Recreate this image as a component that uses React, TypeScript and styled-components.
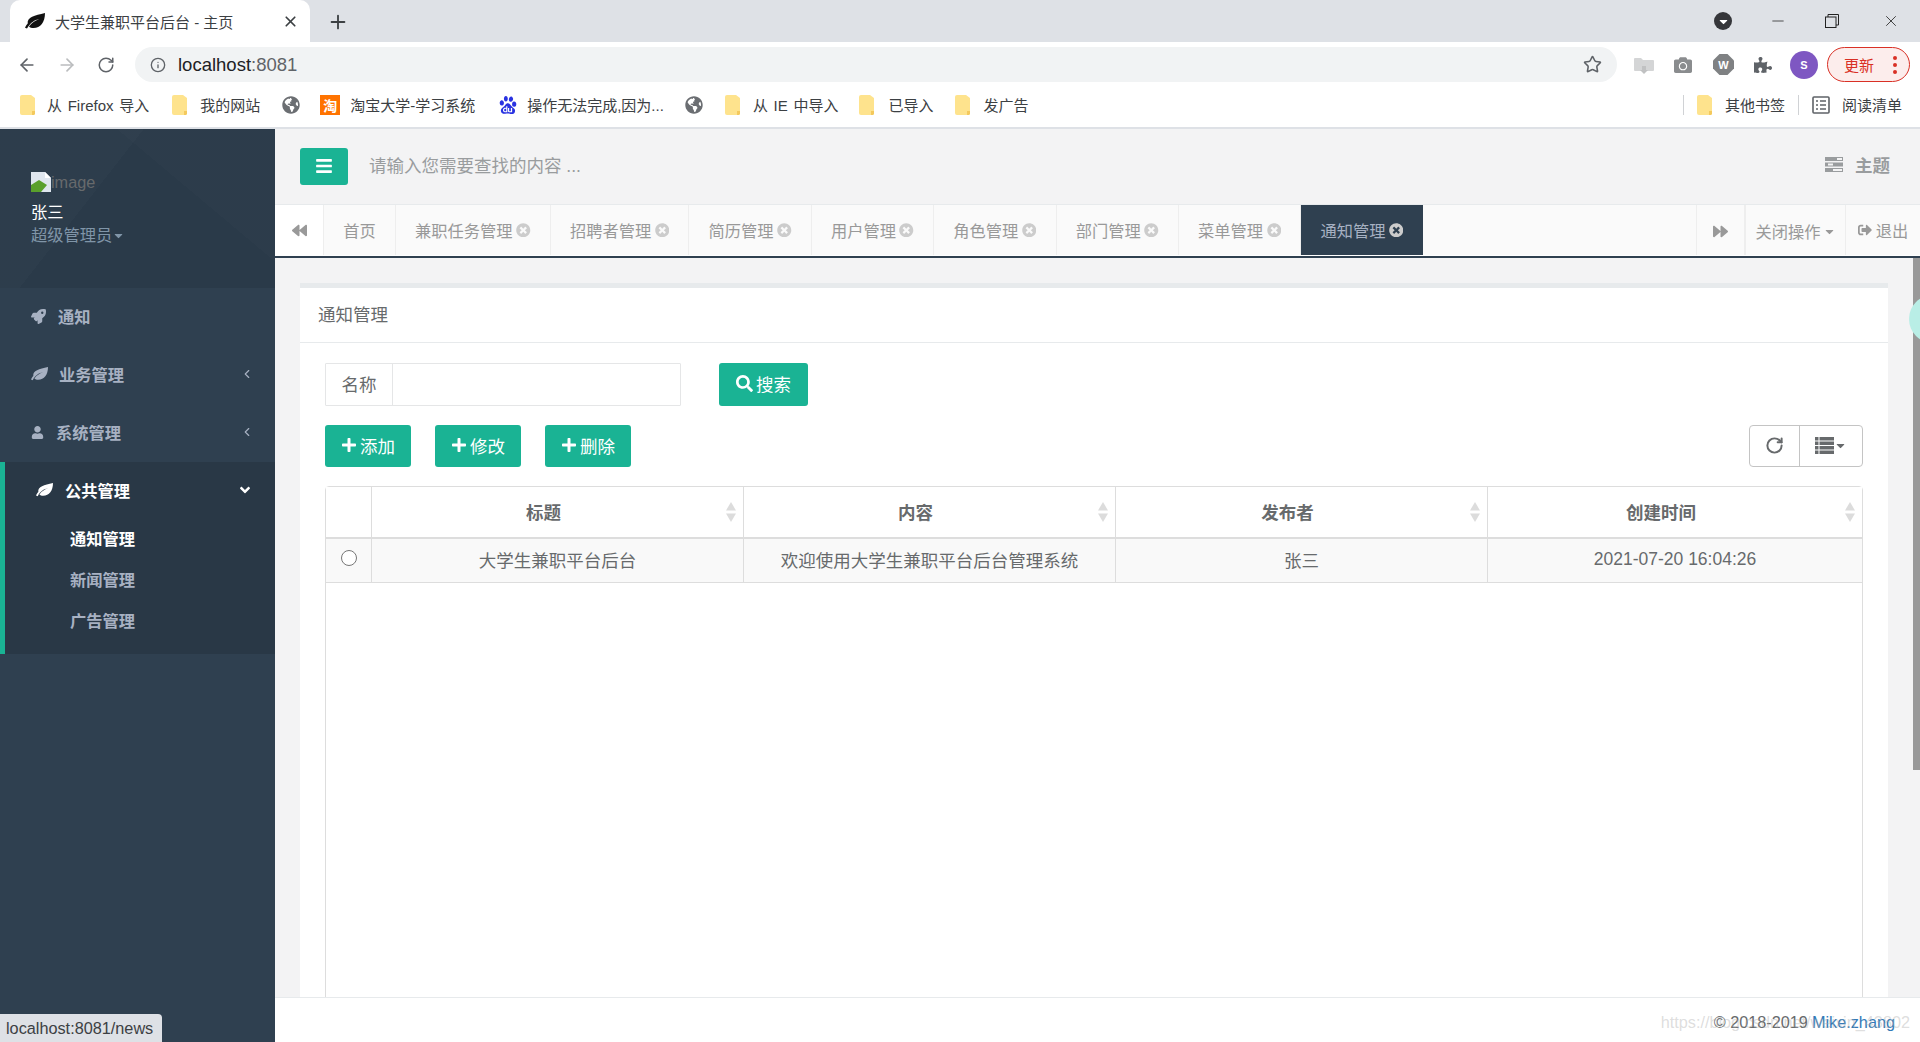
import { ReactNode } from 'react';
import styled, { createGlobalStyle } from 'styled-components';
import {
  FaAngleDown,
  FaBackward,
  FaBars,
  FaCamera,
  FaCaretDown,
  FaForward,
  FaGlobeAmericas,
  FaPlus,
  FaPuzzlePiece,
  FaRocket,
  FaSearch,
  FaSignOutAlt,
  FaTimesCircle,
  FaUser,
} from 'react-icons/fa';
import { SiBaidu } from 'react-icons/si';
import { ArrowLeft, ArrowRight, ChevronLeft, Info, Minus, Plus, RotateCw, Star, X } from 'lucide-react';

const GlobalStyle = createGlobalStyle`
  html, body { margin: 0; padding: 0; height: 100%; }
  body {
    font-family: "Liberation Sans", "Noto Sans CJK SC", sans-serif;
    color: #676a6c;
    overflow: hidden;
  }
  * { box-sizing: border-box; }
`;

const Root = styled.div`
  position: relative;
  width: 1920px;
  height: 1042px;
  overflow: hidden;
  display: flex;
  flex-direction: column;
`;

/* browser chrome */
const TabStrip = styled.div`
  height: 42px;
  background: #dee1e6;
  display: flex;
  align-items: flex-end;
  padding-left: 10px;
  color: #3c4043;
`;
const BrowserTab = styled.div`
  width: 300px;
  height: 42px;
  background: #fff;
  border-radius: 10px 10px 0 0;
  display: flex;
  align-items: center;
  padding-left: 15px;
  font-size: 15px;
  color: #3c4043;
`;
const TabTitle = styled.span`
  margin-left: 10px;
  flex: 1;
  white-space: nowrap;
`;
const TabClose = styled.span`
  display: flex;
  margin-right: 11px;
`;
const NewTab = styled.span`
  display: flex;
  margin: 0 0 9px 17px;
  color: #3c4043;
`;
const WindowControls = styled.div`
  margin-left: auto;
  height: 42px;
  display: flex;
  align-items: center;
  color: #222;
`;
const DropCircle = styled.span`
  width: 18px;
  height: 18px;
  border-radius: 50%;
  background: #35363a;
  display: flex;
  align-items: center;
  justify-content: center;
  color: #fff;
  margin-right: 37px;
`;
const WinButton = styled.span<{ $gap: number }>`
  display: flex;
  margin-right: ${(p) => p.$gap}px;
`;

const Toolbar = styled.div`
  height: 42px;
  background: #fff;
  display: flex;
  align-items: center;
  padding: 3px 0 0 17px;
`;
const NavIcon = styled.span<{ $off?: boolean }>`
  display: flex;
  width: 20px;
  margin-right: 20px;
  color: ${(p) => (p.$off ? '#babcbe' : '#5f6368')};
`;
const AddressBar = styled.div`
  width: 1482px;
  height: 35px;
  margin-left: -2px;
  background: #f1f3f4;
  border-radius: 18px;
  display: flex;
  align-items: center;
  padding: 0 15px;
  font-size: 18.5px;
  color: #202124;
`;
const Host = styled.span`
  margin-left: 12px;
`;
const Port = styled.span`
  color: #5f6368;
`;
const StarWrap = styled.span`
  display: flex;
  margin-left: auto;
  color: #5f6368;
`;
const ExtGroup = styled.div`
  display: flex;
  align-items: center;
  margin-left: 17px;
`;
const Ext = styled.span<{ $w: number }>`
  width: ${(p) => p.$w}px;
  display: flex;
  justify-content: center;
  align-items: center;
`;
const OctaText = styled.text`
  font-family: "Liberation Sans", sans-serif;
  font-weight: 700;
  font-size: 11px;
  fill: #fff;
`;
const Avatar = styled.span`
  width: 28px;
  height: 28px;
  flex: none;
  border-radius: 50%;
  background: #7e57c2;
  color: #fff;
  font-size: 11px;
  font-weight: 700;
  display: flex;
  align-items: center;
  justify-content: center;
`;
const UpdatePill = styled.div`
  width: 83px;
  height: 35px;
  margin-left: 11px;
  border: 1.5px solid #d93025;
  border-radius: 18px;
  background: #fcedec;
  color: #d93025;
  font-size: 15px;
  display: flex;
  align-items: center;
  padding-left: 16px;
`;
const Dots = styled.span`
  margin-left: 19px;
  display: flex;
  flex-direction: column;
  gap: 3px;
`;
const Dot = styled.i`
  width: 4px;
  height: 4px;
  border-radius: 50%;
  background: #d93025;
`;

const BookmarkBar = styled.div`
  height: 45px;
  background: #fff;
  border-bottom: 2px solid #dee1e6;
  display: flex;
  align-items: center;
  padding: 0 18px 2px 20px;
  font-size: 15px;
  word-spacing: 1.500px;
  color: #3c4043;
`;
const Bookmark = styled.span<{ $gap: number; $next: number }>`
  display: flex;
  align-items: center;
  gap: ${(p) => p.$gap}px;
  margin-right: ${(p) => p.$next}px;
  white-space: nowrap;
`;
const GlobeIcon = styled(FaGlobeAmericas)`
  color: #6b6e72;
  font-size: 18px;
`;
const TaobaoIcon = styled.span`
  width: 20px;
  height: 20px;
  background: #ff7300;
  color: #fff;
  font-size: 14px;
  font-weight: 700;
  display: flex;
  align-items: center;
  justify-content: center;
`;
const BaiduIcon = styled(SiBaidu)`
  color: #2932e1;
  font-size: 18px;
`;
const BarDivider = styled.span`
  width: 1px;
  height: 20px;
  background: #d0d2d5;
`;
const BookmarkRight = styled.div`
  margin-left: auto;
  display: flex;
  align-items: center;
  gap: 13px;
`;
const ReaderLabel = styled.span`
  margin-left: -1px;
`;

function Folder() {
  return (
    <svg width="16" height="20" viewBox="0 0 16 20">
      <path d="M2 0h9l4 3v15a2 2 0 0 1-2 2H2a2 2 0 0 1-2-2V2a2 2 0 0 1 2-2z" fill="#fee38d" />
      <path d="M12 20v-4h3v3l-1 1z" fill="#f4c95d" />
    </svg>
  );
}

function ReaderIcon() {
  return (
    <svg width="18" height="18" viewBox="0 0 18 18" fill="none" stroke="#5f6368" strokeWidth="1.6">
      <rect x="1" y="1" width="16" height="16" rx="1" />
      <path d="M4 5h2M8 5h6M4 9h2M8 9h6M4 13h2M8 13h6" />
    </svg>
  );
}

function Leaf({ size, color = 'currentColor' }: { size: number; color?: string }) {
  return (
    <svg width={size} height={size * 0.8} viewBox="0 0 20 16" fill={color}>
      <path d="M20 0C20 9 15.500 15 8.500 15C6.500 15 5 14.500 4 13.500C7 9.500 10.500 7.500 14.500 6C9.500 7 5.500 9.500 2 15.500L0 14.800C1 12.500 2 11.200 2.700 10.500C2 4 9.500 2.500 20 0Z" />
    </svg>
  );
}

/* page */
const Body = styled.div`
  flex: 1;
  display: flex;
  min-height: 0;
`;
const Sidebar = styled.aside`
  width: 275px;
  flex: none;
  background: #2f4050;
`;
const Profile = styled.div`
  height: 159px;
  padding: 43px 0 0 31px;
  background:
    linear-gradient(128deg, rgba(255, 255, 255, 0.015) 36%, transparent 36%),
    linear-gradient(40deg, transparent 66%, rgba(255, 255, 255, 0.012) 66%),
    #2a3a49;
`;
const Avatarless = styled.div`
  display: flex;
  align-items: center;
  height: 20px;
  font-size: 16.25px;
  color: #676a6c;
`;
const ProfileName = styled.div`
  margin-top: 8px;
  height: 24px;
  line-height: 24px;
  font-size: 16.25px;
  color: #fff;
`;
const ProfileRole = styled.div`
  height: 22px;
  line-height: 22px;
  font-size: 16.25px;
  color: #8095a8;
  display: flex;
  align-items: center;
`;
const MenuItem = styled.div`
  height: 58px;
  display: flex;
  align-items: center;
  padding: 0 21px 2px 31px;
  font-size: 16.25px;
  font-weight: 700;
  color: #a7b1c2;
`;
const MenuLabel = styled.span<{ $gap: number }>`
  margin-left: ${(p) => p.$gap}px;
  flex: 1;
`;
const ActiveGroup = styled.div`
  height: 192px;
  background: #293846;
  border-left: 5px solid #1ab394;
`;
const ActiveHead = styled(MenuItem)`
  color: #fff;
  padding-right: 22px;
`;
const ActiveHeadIn = styled.div`
  display: flex;
  align-items: center;
  width: 100%;
`;
const SubList = styled.div`
  display: flex;
  flex-direction: column;
  margin-top: -3px;
`;
const SubItem = styled.div<{ $active?: boolean }>`
  height: 41px;
  padding-left: 65px;
  display: flex;
  align-items: center;
  font-size: 16.25px;
  font-weight: 700;
  color: ${(p) => (p.$active ? '#fff' : '#a7b1c2')};
`;

const Main = styled.main`
  flex: 1;
  min-width: 0;
  display: flex;
  flex-direction: column;
  background: #f3f3f4;
`;
const TopNav = styled.div`
  height: 76px;
  flex: none;
  border-bottom: 1px solid #e7eaec;
  display: flex;
  align-items: center;
  padding: 0 30px 1px 25px;
`;
const MenuButton = styled.span`
  width: 48px;
  height: 37px;
  border-radius: 3px;
  background: #1ab394;
  color: #fff;
  display: flex;
  align-items: center;
  justify-content: center;
  font-size: 18px;
`;
const SearchHint = styled.span`
  margin: 0 0 3px 21px;
  font-size: 17.5px;
  color: #999c9e;
`;
const ThemeLink = styled.span`
  margin: 0 0 3px auto;
  display: flex;
  align-items: center;
  gap: 12px;
  font-size: 17.5px;
  font-weight: 700;
  color: #999c9e;
`;
const TabRow = styled.div`
  height: 53px;
  flex: none;
  background: #fff;
  border-bottom: 2px solid #2f4050;
  display: flex;
  color: #999;
  font-size: 16.25px;
`;
const ArrowCell = styled.span<{ $w: number }>`
  width: ${(p) => p.$w}px;
  height: 50px;
  flex: none;
  display: flex;
  align-items: center;
  justify-content: center;
  background: #fff;
  border-right: 1px solid #eee;
  font-size: 15px;
  color: #999;
`;
const PageTab = styled.span<{ $active?: boolean }>`
  height: 50px;
  flex: none;
  padding: 0 19.200px;
  display: flex;
  align-items: center;
  gap: 3.500px;
  white-space: nowrap;
  background: ${(p) => (p.$active ? '#2f4050' : '#fafafa')};
  color: ${(p) => (p.$active ? '#a7b1c2' : '#999')};
  border-right: ${(p) => (p.$active ? '0' : '1px solid #eee')};
`;
const TabFill = styled.span`
  flex: 1;
  height: 50px;
  background: #fafafa;
`;
const RightCell = styled(ArrowCell)`
  border-right: 1px solid #eee;
  border-left: 1px solid #eee;
  background: #fafafa;
  font-size: 16.25px;
  gap: 2px;
  padding-top: 2px;
`;
const LogoutCell = styled.span`
  width: 74px;
  height: 50px;
  background: #fafafa;
  display: flex;
  align-items: center;
  justify-content: center;
  gap: 4px;
`;
const CloseIcon = styled(FaTimesCircle)`
  color: #ccc;
  font-size: 14.500px;
`;
const Content = styled.div`
  flex: 1;
  min-height: 0;
  overflow: hidden;
  padding: 25px 32px 0 25px;
`;
const Panel = styled.section`
  background: #fff;
  border-top: 5px solid #e7eaec;
`;
const PanelTitle = styled.h5`
  margin: 0;
  height: 55px;
  padding: 0 0 3px 18px;
  display: flex;
  align-items: center;
  font-size: 17.5px;
  font-weight: 400;
  border-bottom: 1px solid #e7eaec;
`;
const PanelBody = styled.div`
  padding: 20px 25px;
  display: flex;
  flex-direction: column;
  gap: 19px;
`;
const SearchRow = styled.div`
  display: flex;
  gap: 38px;
`;
const InputGroup = styled.div`
  width: 356px;
  height: 43px;
  border: 1px solid #e5e6e7;
  border-radius: 1px;
  display: flex;
`;
const Addon = styled.span`
  width: 67px;
  border-right: 1px solid #e5e6e7;
  display: flex;
  align-items: center;
  justify-content: center;
  padding-bottom: 2px;
  font-size: 17.5px;
`;
const PrimaryButton = styled.span<{ $h: number; $w: number }>`
  width: ${(p) => p.$w}px;
  height: ${(p) => p.$h}px;
  border-radius: 3px;
  background: #1ab394;
  color: #fff;
  display: flex;
  align-items: center;
  justify-content: center;
  gap: 3px;
  padding-bottom: 2px;
  font-size: 17.5px;
`;
const ToolRow = styled.div`
  display: flex;
  gap: 24px;
`;
const ToolGroup = styled.div`
  margin-left: auto;
  width: 114px;
  height: 42px;
  border: 1px solid #c4c4c4;
  border-radius: 4px;
  display: flex;
  color: #676a6c;
`;
const ToolCell = styled.span<{ $w?: number }>`
  width: ${(p) => p.$w ?? 49}px;
  display: flex;
  align-items: center;
  justify-content: center;
  flex: ${(p) => (p.$w ? 'none' : 1)};
  padding-bottom: 2px;
  & + & {
    border-left: 1px solid #c4c4c4;
  }
`;
const TableBox = styled.div`
  height: 640px;
  border: 1px solid #ddd;
  border-radius: 4px;
`;
const Row = styled.div<{ $head?: boolean }>`
  display: grid;
  grid-template-columns: 45px 372px 372px 372px 1fr;
  height: ${(p) => (p.$head ? 52 : 44)}px;
  background: ${(p) => (p.$head ? '#fff' : '#f9f9f9')};
  border-bottom: ${(p) => (p.$head ? '2px' : '1px')} solid #ddd;
`;
const Cell = styled.div<{ $head?: boolean }>`
  position: relative;
  display: flex;
  align-items: center;
  justify-content: center;
  font-size: 17.5px;
  font-weight: ${(p) => (p.$head ? 700 : 400)};
  padding: 0 ${(p) => (p.$head ? 28 : 0)}px 2px 0;
  & + & {
    border-left: 1px solid #ddd;
  }
`;
const SortIcon = styled.svg`
  position: absolute;
  right: 7px;
  top: 15px;
`;
const Radio = styled.input`
  width: 16px;
  height: 16px;
  margin: 0 0 4px;
  accent-color: #767676;
`;
const Footer = styled.footer`
  height: 45px;
  flex: none;
  background: #fff;
  border-top: 1px solid #e7eaec;
  display: flex;
  align-items: center;
  justify-content: flex-end;
  padding: 4px 25px 0 0;
  font-size: 16.25px;
  position: relative;
`;
const FooterLink = styled.span`
  color: #337ab7;
  margin-left: 4px;
`;
const Watermark = styled.span`
  position: absolute;
  right: 10px;
  top: 15px;
  font-size: 16.25px;
  color: rgba(170, 170, 170, 0.4);
  white-space: nowrap;
`;
const ScrollThumb = styled.div`
  position: absolute;
  right: 0;
  top: 258px;
  width: 7px;
  height: 512px;
  background: #999;
`;
const TealBlob = styled.div`
  position: absolute;
  left: 1909px;
  top: 295px;
  width: 48px;
  height: 48px;
  border-radius: 50%;
  background: #b9eee6;
`;
const StatusBubble = styled.div`
  position: absolute;
  left: 0;
  bottom: 0;
  width: 162px;
  height: 28px;
  background: #dee1e6;
  border-top-right-radius: 4px;
  display: flex;
  align-items: center;
  padding-left: 6px;
  font-size: 16.25px;
  color: #3c4043;
`;

const tabs = ['兼职任务管理', '招聘者管理', '简历管理', '用户管理', '角色管理', '部门管理', '菜单管理'];
const columns = ['标题', '内容', '发布者', '创建时间'];
const rowData = ['大学生兼职平台后台', '欢迎使用大学生兼职平台后台管理系统', '张三', '2021-07-20 16:04:26'];

function Sort() {
  return (
    <SortIcon width="10" height="20" viewBox="0 0 10 20">
      <path d="M5 0l5 8.500H0z" fill="#dcdcdc" />
      <path d="M5 20l5-8.500H0z" fill="#dcdcdc" />
    </SortIcon>
  );
}

function ListGlyph() {
  return (
    <svg width="19" height="17" viewBox="0 0 19 17" fill="currentColor">
      <path d="M0 0h3.500v3.500H0zM4.500 0H19v3.500H4.500zM0 4.500h3.500V8H0zM4.500 4.500H19V8H4.500zM0 9h3.500v3.500H0zM4.500 9H19v3.500H4.500zM0 13.500h3.500V17H0zM4.500 13.500H19V17H4.500z" />
    </svg>
  );
}

function NavRow({ icon, label, gap, arrow }: { icon: ReactNode; label: string; gap: number; arrow?: boolean }) {
  return (
    <MenuItem>
      {icon}
      <MenuLabel $gap={gap}>{label}</MenuLabel>
      {arrow && <ChevronLeft size={14} strokeWidth={2} />}
    </MenuItem>
  );
}

export default function App() {
  return (
    <Root>
      <GlobalStyle />
      <TabStrip>
        <BrowserTab>
          <Leaf size={20} color="#111" />
          <TabTitle>大学生兼职平台后台 - 主页</TabTitle>
          <TabClose>
            <X size={17} strokeWidth={2.400} />
          </TabClose>
        </BrowserTab>
        <NewTab>
          <Plus size={22} strokeWidth={2} />
        </NewTab>
        <WindowControls>
          <DropCircle>
            <FaCaretDown size={13} />
          </DropCircle>
          <WinButton $gap={38}>
            <Minus size={18} strokeWidth={1} />
          </WinButton>
          <WinButton $gap={43}>
            <svg width="14" height="14" viewBox="0 0 14 14" fill="none" stroke="#222" strokeWidth="1">
              <rect x="0.500" y="3" width="10.500" height="10.500" />
              <path d="M3 3V0.500h10.500V11H11" />
            </svg>
          </WinButton>
          <WinButton $gap={20}>
            <X size={18} strokeWidth={1.100} />
          </WinButton>
        </WindowControls>
      </TabStrip>
      <Toolbar>
        <NavIcon>
          <ArrowLeft size={20} />
        </NavIcon>
        <NavIcon $off>
          <ArrowRight size={20} />
        </NavIcon>
        <NavIcon>
          <RotateCw size={18} />
        </NavIcon>
        <AddressBar>
          <Info size={16} color="#5f6368" />
          <Host>
            localhost<Port>:8081</Port>
          </Host>
          <StarWrap>
            <Star size={19} strokeWidth={2} />
          </StarWrap>
        </AddressBar>
        <ExtGroup>
          <Ext $w={20}>
            <svg width="20" height="20" viewBox="0 0 20 20">
              <path d="M0 4a1 1 0 0 1 1-1h6l2 2h10a1 1 0 0 1 1 1v9a1 1 0 0 1-1 1H1a1 1 0 0 1-1-1z" fill="#d4d5d6" />
              <path d="M8 11h4v4h2l-4 4-4-4h2z" fill="#c0c1c2" />
            </svg>
          </Ext>
          <Ext $w={58}>
            <FaCamera size={18} color="#8a8c8e" />
          </Ext>
          <Ext $w={22}>
            <svg width="21" height="21" viewBox="0 0 21 21">
              <path d="M6.500 0h8L21 6.500v8L14.500 21h-8L0 14.500v-8z" fill="#7f8183" />
              <OctaText x="10.500" y="14.500" textAnchor="middle">
                W
              </OctaText>
            </svg>
          </Ext>
          <Ext $w={58}>
            <FaPuzzlePiece size={18} color="#5f6368" />
          </Ext>
          <Ext $w={24}>
            <Avatar>S</Avatar>
          </Ext>
          <UpdatePill>
            更新
            <Dots>
              <Dot />
              <Dot />
              <Dot />
            </Dots>
          </UpdatePill>
        </ExtGroup>
      </Toolbar>
      <BookmarkBar>
        <Bookmark $gap={11} $next={23}>
          <Folder />从 Firefox 导入
        </Bookmark>
        <Bookmark $gap={12} $next={22}>
          <Folder />我的网站
        </Bookmark>
        <Bookmark $gap={0} $next={20}>
          <GlobeIcon />
        </Bookmark>
        <Bookmark $gap={10} $next={24}>
          <TaobaoIcon>淘</TaobaoIcon>淘宝大学-学习系统
        </Bookmark>
        <Bookmark $gap={10} $next={21}>
          <BaiduIcon />操作无法完成,因为...
        </Bookmark>
        <Bookmark $gap={0} $next={22}>
          <GlobeIcon />
        </Bookmark>
        <Bookmark $gap={12} $next={21}>
          <Folder />从 IE 中导入
        </Bookmark>
        <Bookmark $gap={13} $next={22}>
          <Folder />已导入
        </Bookmark>
        <Bookmark $gap={12} $next={0}>
          <Folder />发广告
        </Bookmark>
        <BookmarkRight>
          <BarDivider />
          <Bookmark $gap={12} $next={0}>
            <Folder />其他书签
          </Bookmark>
          <BarDivider />
          <ReaderIcon />
          <ReaderLabel>阅读清单</ReaderLabel>
        </BookmarkRight>
      </BookmarkBar>
      <Body>
        <Sidebar>
          <Profile>
            <Avatarless>
              <svg width="20" height="20" viewBox="0 0 20 20">
                <path d="M0 0h14l6 6v14H0z" fill="#dfe6ee" />
                <path d="M0 20v-7l8-5 8 5-6 7z" fill="#5aa02c" />
                <path d="M14 0l6 6h-6z" fill="#fff" />
              </svg>
              image
            </Avatarless>
            <ProfileName>张三</ProfileName>
            <ProfileRole>
              超级管理员
              <FaCaretDown size={13} />
            </ProfileRole>
          </Profile>
          <NavRow icon={<FaRocket size={15} />} label="通知" gap={12} />
          <NavRow icon={<Leaf size={17} />} label="业务管理" gap={11} arrow />
          <NavRow icon={<FaUser size={13} />} label="系统管理" gap={12} arrow />
          <ActiveGroup>
            <ActiveHead>
              <ActiveHeadIn>
                <Leaf size={17} />
                <MenuLabel $gap={12}>公共管理</MenuLabel>
                <FaAngleDown size={16} />
              </ActiveHeadIn>
            </ActiveHead>
            <SubList>
              <SubItem $active>通知管理</SubItem>
              <SubItem>新闻管理</SubItem>
              <SubItem>广告管理</SubItem>
            </SubList>
          </ActiveGroup>
        </Sidebar>
        <Main>
          <TopNav>
            <MenuButton>
              <FaBars />
            </MenuButton>
            <SearchHint>请输入您需要查找的内容 ...</SearchHint>
            <ThemeLink>
              <svg width="18" height="15" viewBox="0 0 18 15" fill="#999c9e">
                <path d="M0 0h18v4H0zM0 5.500h18v4H0zM0 11h18v4H0z" />
                <path d="M12 1h5v2h-5zM3 6.500h5v2H3zM8 12h9v2H8z" fill="#f3f3f4" />
              </svg>
              主题
            </ThemeLink>
          </TopNav>
          <TabRow>
            <ArrowCell $w={49}>
              <FaBackward />
            </ArrowCell>
            <PageTab>首页</PageTab>
            {tabs.map((t) => (
              <PageTab key={t}>
                {t}
                <CloseIcon />
              </PageTab>
            ))}
            <PageTab $active>
              通知管理
              <CloseIcon />
            </PageTab>
            <TabFill />
            <RightCell $w={49}>
              <FaForward size={15} />
            </RightCell>
            <RightCell $w={101}>
              关闭操作
              <FaCaretDown size={13} />
            </RightCell>
            <LogoutCell>
              <FaSignOutAlt size={14} />
              退出
            </LogoutCell>
          </TabRow>
          <Content>
            <Panel>
              <PanelTitle>通知管理</PanelTitle>
              <PanelBody>
                <SearchRow>
                  <InputGroup>
                    <Addon>名称</Addon>
                  </InputGroup>
                  <PrimaryButton $w={89} $h={43}>
                    <FaSearch size={17} />
                    搜索
                  </PrimaryButton>
                </SearchRow>
                <ToolRow>
                  {['添加', '修改', '删除'].map((t) => (
                    <PrimaryButton key={t} $w={86} $h={42}>
                      <FaPlus size={16} />
                      {t}
                    </PrimaryButton>
                  ))}
                  <ToolGroup>
                    <ToolCell $w={49}>
                      <RotateCw size={19} strokeWidth={2.500} />
                    </ToolCell>
                    <ToolCell>
                      <ListGlyph />
                      <FaCaretDown size={13} />
                    </ToolCell>
                  </ToolGroup>
                </ToolRow>
                <TableBox>
                  <Row $head>
                    <Cell />
                    {columns.map((c) => (
                      <Cell key={c} $head>
                        {c}
                        <Sort />
                      </Cell>
                    ))}
                  </Row>
                  <Row>
                    <Cell>
                      <Radio type="radio" readOnly />
                    </Cell>
                    {rowData.map((c) => (
                      <Cell key={c}>{c}</Cell>
                    ))}
                  </Row>
                </TableBox>
              </PanelBody>
            </Panel>
          </Content>
          <Footer>
            © 2018-2019 <FooterLink>Mike.zhang</FooterLink>
            <Watermark>https://blog.csdn.net/weixin_43802</Watermark>
          </Footer>
        </Main>
      </Body>
      <ScrollThumb />
      <TealBlob />
      <StatusBubble>localhost:8081/news</StatusBubble>
    </Root>
  );
}
